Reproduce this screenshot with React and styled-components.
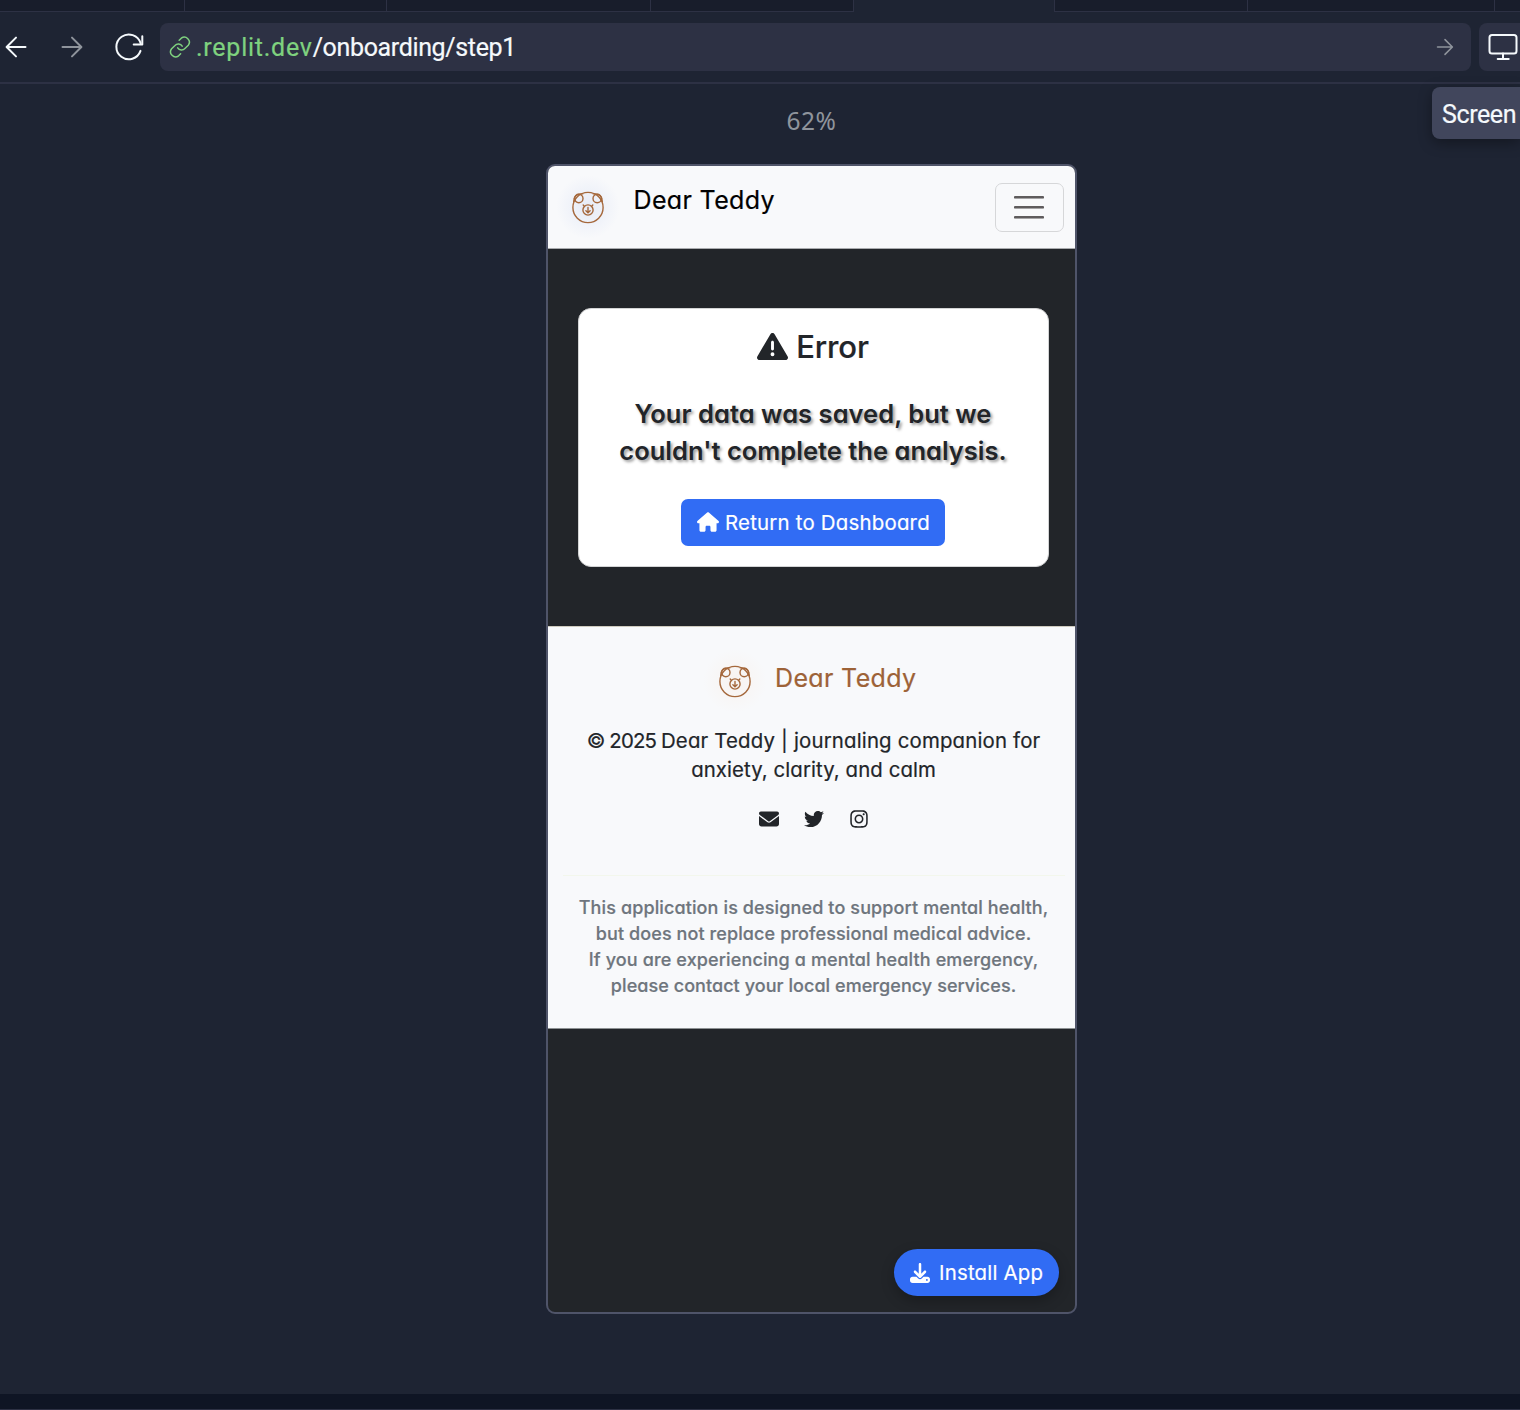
import React from 'react';
import styled, { createGlobalStyle } from 'styled-components';
import {
  FaTriangleExclamation,
  FaHouse,
  FaEnvelope,
  FaTwitter,
  FaInstagram,
  FaDownload,
} from 'react-icons/fa6';

const GlobalStyle = createGlobalStyle`
  *, *::before, *::after { box-sizing: border-box; }
  body { margin: 0; background: #1e2433; }
  svg { display: block; flex: none; }
  p, h1 { margin: 0; }
`;

const uiFont = `Roboto, "Noto Sans", sans-serif`;
const appFont = `Inter, "Open Sans", sans-serif`;

const Workspace = styled.div`
  width: 1520px;
  height: 1410px;
  display: flex;
  flex-direction: column;
  overflow: hidden;
  background: #1e2433;
  font-family: ${uiFont};
`;

const TabStrip = styled.div`
  display: flex;
  height: 12px;
  flex: none;
`;

const Tab = styled.div`
  width: ${(p) => p.$width}px;
  flex: none;
  background: ${(p) => (p.$active ? '#1e2433' : '#181d2b')};
  border-right: 1px solid #2d3144;
  border-bottom: ${(p) => (p.$active ? 'none' : '1px solid #2d3144')};
`;

const Toolbar = styled.div`
  display: flex;
  align-items: center;
  flex: none;
  height: 72px;
  border-bottom: 2px solid #2d3144;
`;

const NavButtons = styled.div`
  display: flex;
  align-items: center;
  flex: none;
  width: 160px;
  gap: 28px;
  padding-left: 2px;
`;

const AddressBar = styled.div`
  display: flex;
  align-items: center;
  width: 1311px;
  height: 48px;
  flex: none;
  padding: 0 15px 0 8px;
  border-radius: 8px;
  background: #2d3144;
`;

const Url = styled.div`
  flex: 1;
  padding: 2px 0 0 4px;
  font-size: 25px;
  line-height: 46px;
  letter-spacing: -0.35px;
  white-space: nowrap;
  color: #f5f9fc;
  -webkit-text-stroke: 0.2px currentColor;
`;

const Host = styled.span`
  color: #7fd27f;
  letter-spacing: 0.75px;
`;

const DeviceButton = styled.div`
  display: flex;
  align-items: center;
  width: 60px;
  height: 48px;
  flex: none;
  margin-left: 8px;
  padding-left: 8px;
  border-radius: 8px;
  background: #2d3144;
`;

const Tooltip = styled.div`
  position: absolute;
  left: 1432px;
  top: 87px;
  width: 88px;
  height: 52px;
  overflow: hidden;
  padding-left: 10px;
  border-radius: 8px 0 0 8px;
  background: #41465c;
  box-shadow: 0 4px 14px rgba(2, 2, 3, 0.35);
  color: #f5f9fc;
  font-size: 25px;
  line-height: 55px;
  letter-spacing: -0.4px;
  white-space: nowrap;
  -webkit-text-stroke: 0.2px currentColor;
`;

const Preview = styled.main`
  display: flex;
  flex-direction: column;
  align-items: center;
  flex: 1;
  padding-left: 103px;
`;

const ZoomLevel = styled.div`
  height: 80px;
  padding-top: 21px;
  color: #8f949c;
  font-family: "Noto Sans", sans-serif;
  font-size: 24.5px;
  line-height: 32px;
  letter-spacing: 0.5px;
`;

const StatusStrip = styled.div`
  height: 16px;
  flex: none;
  background: #0f1524;
  border-bottom: 1px solid #2d3144;
`;

const Phone = styled.div`
  position: relative;
  display: flex;
  flex-direction: column;
  width: 531px;
  height: 1150px;
  overflow: hidden;
  border: 2px solid #4f5469;
  border-radius: 9px;
  background: #222529;
  font-family: ${appFont};
  font-feature-settings: 'cv11';
  -webkit-text-stroke: 0.2px currentColor;
`;

const AppHeader = styled.header`
  display: flex;
  align-items: center;
  height: 83px;
  flex: none;
  padding: 0 11px 0 7.5px;
  border-bottom: 1px solid #a9abae;
  background: #f8f9fb;
`;

const LogoGlow = styled.div`
  display: grid;
  place-items: center;
  width: 64px;
  height: 64px;
  border-radius: 50%;
  background: radial-gradient(circle, ${(p) => p.$glow} 0%, transparent 70%);
`;

const Brand = styled.div`
  flex: ${(p) => (p.$grow ? 1 : 'none')};
  margin-left: ${(p) => p.$gap}px;
  margin-bottom: ${(p) => p.$lift}px;
  color: ${(p) => p.$color};
  font-size: 25px;
  line-height: 32px;
  letter-spacing: 0.35px;
  white-space: nowrap;
`;

const MenuButton = styled.div`
  display: flex;
  flex-direction: column;
  align-items: center;
  justify-content: center;
  gap: 7px;
  width: 69px;
  height: 49px;
  padding-right: 1px;
  border: 1px solid #d6d7d9;
  border-radius: 7px;
`;

const MenuLine = styled.span`
  width: 30px;
  height: 3px;
  border-radius: 1px;
  background: linear-gradient(#5f5c5d 67%, #a5a4a5 67%);
`;

const Content = styled.section`
  flex: none;
  height: 377px;
  padding: 59px 26px 0 30px;
`;

const Card = styled.div`
  display: flex;
  flex-direction: column;
  align-items: center;
  height: 259px;
  padding: 17px 1px 0 0;
  border: 1px solid #d3d4d5;
  border-radius: 13px;
  background: #fff;
  color: #222529;
`;

const CardTitle = styled.h1`
  display: flex;
  align-items: center;
  gap: 8px;
  height: 40px;
  font-size: 31px;
  font-weight: 500;
  letter-spacing: -0.1px;
`;

const Message = styled.div`
  margin-top: 29px;
  display: flex;
  flex-direction: column;
  align-items: center;
  font-size: 25.5px;
  font-weight: 600;
  line-height: 37px;
  text-shadow: 2px 2px 3px rgba(0, 0, 0, 0.4);
  -webkit-text-stroke: 0;
`;

const Line = styled.p`
  white-space: nowrap;
  letter-spacing: ${(p) => p.$spacing}px;
  margin-right: ${(p) => -p.$spacing}px;
`;

const Year = styled.span`
  letter-spacing: -0.85px;
`;

const DashboardButton = styled.div`
  display: flex;
  align-items: center;
  gap: 6px;
  width: 264px;
  height: 47px;
  margin-top: 30px;
  padding: 0 0 1px 16px;
  border-radius: 7px;
  background: #316cf4;
  color: #fff;
  font-size: 20.4px;
  white-space: nowrap;
  letter-spacing: 0.22px;
`;

const Footer = styled.footer`
  display: flex;
  flex-direction: column;
  height: 403px;
  flex: none;
  border-top: 1px solid #cfcbbf;
  border-bottom: 1px solid #8d9193;
  background: #f8f9fb;
  color: #222529;
`;

const FooterBrand = styled.div`
  display: flex;
  align-items: center;
  height: 64px;
  margin-top: 22px;
  padding-left: 155px;
`;

const Copyright = styled.div`
  display: flex;
  flex-direction: column;
  align-items: center;
  margin-top: 13px;
  padding-left: 4px;
  font-size: 20.4px;
  line-height: 29px;
`;

const Socials = styled.div`
  display: flex;
  align-items: center;
  justify-content: center;
  gap: 25px;
  height: 20px;
  margin-top: 25px;
  padding-left: 4px;
`;

const Divider = styled.div`
  height: 1px;
  margin: 46px 10px 0 15px;
  background: #f3f7ec;
`;

const Disclaimer = styled.div`
  display: flex;
  flex-direction: column;
  align-items: center;
  margin-top: 19.4px;
  padding-left: 4px;
  color: #6e757d;
  font-size: 18px;
  font-weight: 500;
  line-height: 25.7px;
`;

const InstallButton = styled.div`
  position: absolute;
  right: 16px;
  bottom: 16px;
  display: flex;
  align-items: center;
  gap: 9px;
  width: 165px;
  height: 47px;
  padding-left: 16px;
  border-radius: 24px;
  background: #316cf4;
  box-shadow: 0 5px 13px rgba(0, 0, 0, 0.25);
  color: #fff;
  font-size: 20.4px;
  white-space: nowrap;
  letter-spacing: 0.2px;
`;

function Arrow({ size, color, flip }) {
  return (
    <svg width={size} height={size} viewBox="0 0 28 28" fill="none" stroke={color} strokeWidth="2" strokeLinecap="round" strokeLinejoin="round">
      {flip ? <path d="M23.5 14H4.8M14 4.6 4.6 14l9.4 9.4" /> : <path d="M4.5 14h18.7M14 4.6l9.4 9.4-9.4 9.4" />}
    </svg>
  );
}

function Reload() {
  return (
    <svg width="32" height="32" viewBox="2 -0.7 32 32" fill="none" stroke="#f5f9fc" strokeWidth="2" strokeLinecap="round" strokeLinejoin="round">
      <path d="M28.5 19.2A12.4 12.4 0 1 1 28.6 11.4" />
      <path d="M30.3 4.5v8.2h-8.6" />
    </svg>
  );
}

function Chain() {
  return (
    <svg width="24" height="24" viewBox="0 0 24 24" fill="none" stroke="#7fd27f" strokeWidth="1.5" strokeLinecap="round" strokeLinejoin="round">
      <path d="M9.7 12.8a4.6 4.6 0 0 0 7.2.7l3.4-3.3a5 5 0 0 0-7-7l-2.1 2" />
      <path d="M14.2 11.2a4.6 4.6 0 0 0-7.2-.7l-3.4 3.3a5 5 0 0 0 7 7l2-2" />
    </svg>
  );
}

function Monitor() {
  return (
    <svg width="32" height="32" viewBox="0 0 32 32" fill="none" stroke="#f5f9fc" strokeWidth="2" strokeLinecap="round" strokeLinejoin="round">
      <rect x="2.5" y="4" width="27" height="18.5" rx="2.5" />
      <path d="M16 22.5V28M10.7 28h11" />
    </svg>
  );
}

function Bear() {
  return (
    <svg width="36" height="36" viewBox="0 -0.5 36 36" fill="none" stroke="#a5683c" strokeWidth="1.4" strokeLinecap="round">
      <circle cx="18" cy="18" r="15.1" />
      <circle cx="8.8" cy="9" r="4.2" />
      <circle cx="27.2" cy="9" r="4.2" />
      <path d="M3.7 12.4C3.4 7.5 6.5 3.8 12.7 4.4M32.3 12.4C32.6 7.5 29.5 3.8 23.3 4.4" />
      <circle cx="18" cy="20.5" r="5.1" />
      <path d="M13.2 15.6l.9.9M22.8 15.6l-.9.9M18 18v5M15.9 21.3 18 23.3l2.1-2" />
    </svg>
  );
}

const tabs = [185, 202, 264, 203, 201, 193, 247, 60];

export default function App() {
  return (
    <Workspace>
      <GlobalStyle />
      <TabStrip>
        {tabs.map((width, i) => (
          <Tab key={i} $width={width} $active={i === 4} />
        ))}
      </TabStrip>
      <Toolbar>
        <NavButtons>
          <Arrow size={28} color="#f5f9fc" flip />
          <Arrow size={28} color="#8f949c" />
          <Reload />
        </NavButtons>
        <AddressBar>
          <Chain />
          <Url>
            <Host>.replit.dev</Host>/onboarding/step1
          </Url>
          <Arrow size={22} color="#8f949c" />
        </AddressBar>
        <DeviceButton>
          <Monitor />
        </DeviceButton>
      </Toolbar>
      <Preview>
        <ZoomLevel>62%</ZoomLevel>
        <Phone>
          <AppHeader>
            <LogoGlow $glow="#e6ebf7">
              <Bear />
            </LogoGlow>
            <Brand $grow $gap={14} $lift={14} $color="#000">Dear Teddy</Brand>
            <MenuButton>
              <MenuLine />
              <MenuLine />
              <MenuLine />
            </MenuButton>
          </AppHeader>
          <Content>
            <Card>
              <CardTitle>
                <FaTriangleExclamation size={31} />
                Error
              </CardTitle>
              <Message>
                <Line $spacing={0.03}>Your data was saved, but we</Line>
                <Line $spacing={0.01}>couldn't complete the analysis.</Line>
              </Message>
              <DashboardButton>
                <FaHouse size={22} />
                Return to Dashboard
              </DashboardButton>
            </Card>
          </Content>
          <Footer>
            <FooterBrand>
              <LogoGlow $glow="#f8f3f0">
                <Bear />
              </LogoGlow>
              <Brand $gap={8} $lift={6} $color="#9d6237">Dear Teddy</Brand>
            </FooterBrand>
            <Copyright>
              <Line $spacing={0.17}>
                <Year>© 2025 </Year>Dear Teddy | journaling companion for
              </Line>
              <Line $spacing={0.08}>anxiety, clarity, and calm</Line>
            </Copyright>
            <Socials>
              <FaEnvelope size={20} />
              <FaTwitter size={20} />
              <FaInstagram size={20} />
            </Socials>
            <Divider />
            <Disclaimer>
              <Line $spacing={0.12}>This application is designed to support mental health,</Line>
              <Line $spacing={0.1}>but does not replace professional medical advice.</Line>
              <Line $spacing={0.13}>If you are experiencing a mental health emergency,</Line>
              <Line $spacing={0.06}>please contact your local emergency services.</Line>
            </Disclaimer>
          </Footer>
          <InstallButton>
            <FaDownload size={20} />
            Install App
          </InstallButton>
        </Phone>
      </Preview>
      <StatusStrip />
      <Tooltip>Screen</Tooltip>
    </Workspace>
  );
}
